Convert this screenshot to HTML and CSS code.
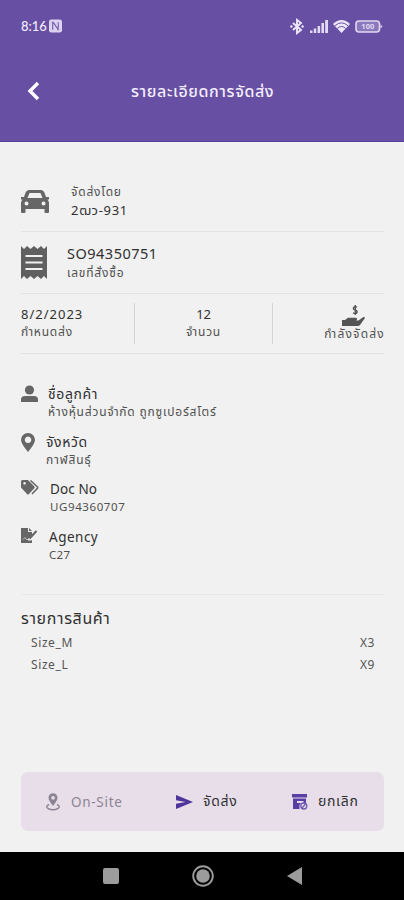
FILE: index.html
```html
<!DOCTYPE html>
<html lang="th">
<head>
<meta charset="utf-8">
<title>รายละเอียดการจัดส่ง</title>
<link rel="stylesheet" href="styles.css">
</head>
<body>
<header class="header">
  <div class="status">
    <span class="clock">8:16</span>
    <svg class="nfc" width="13" height="14" viewBox="0 0 14 14"><rect width="14" height="14" rx="2.5" fill="#dcd2ef"/><path d="M4 11V4.5Q4 3 5.2 4L9 9.5Q10 10.5 10 9V3M3 3h2M9 11h2" fill="none" stroke="#725cab" stroke-width="1.2"/></svg>
    <span class="grow"></span>
    <svg class="bt" width="14" height="15" viewBox="0 0 14 15"><path d="M3 4l8 7-4 3V1l4 3-8 7" fill="none" stroke="#eee7fa" stroke-width="1.9"/><circle cx="1.4" cy="7.5" r="1.2" fill="#eee7fa"/><circle cx="12.6" cy="7.5" r="1.2" fill="#eee7fa"/></svg>
    <svg class="signal" width="18" height="13" viewBox="0 0 18 13"><path d="M0 10.500h2.500V13H0zM3.800 8.500h2.500V13H3.800zM7.600 6h2.500v7H7.600zM11.400 3h2.600v10h-2.600zM15.200 0H18v13h-2.800z" fill="#e3daf4"/></svg>
    <svg class="wifi" width="17" height="13" viewBox="0 0 17 13"><path d="M0 4Q8.500-4 17 4L8.500 13Z" fill="#eee7fa"/><path d="M2 5.700Q8.500 0 15 5.700M4.500 8.300Q8.500 4.700 12.500 8.300" fill="none" stroke="#674fa3" stroke-width="1"/></svg>
    <svg class="battery" width="28" height="13" viewBox="0 0 28 13"><rect x="1" y="1" width="23.500" height="11" rx="3" fill="#8b78bb" stroke="#e0d7f2" stroke-width="1.600"/><path d="M25.500 4.500l2 2-2 2z" fill="#e0d7f2"/><text x="12.800" y="9.300" text-anchor="middle" font-size="7.500" font-weight="700" fill="#e0d7f2">100</text></svg>
  </div>
  <div class="titlebar">
    <svg class="back" width="13" height="20" viewBox="0 0 13 20"><path d="M11 2L3 10l8 8" fill="none" stroke="#fff" stroke-width="3.400"/></svg>
    <h1 class="title">รายละเอียดการจัดส่ง</h1>
  </div>
</header>
<main class="main">
  <section class="row carrier">
    <svg width="28" height="24" viewBox="0 0 28 24"><path d="M8 1h12q2.500 0 3.400 2.500L25 8h3v2.500h-1.500Q28 12 28 14v9q0 1-1 1h-2.500q-1 0-1-1v-3h-19v3q0 1-1 1H1q-1 0-1-1v-9q0-2 1.500-3.500H0V8h3l1.600-4.500Q5.500 1 8 1zM8.500 4L6.500 9h15l-2-5zM5.500 12.500a2 2 0 1 0 .1 4 2 2 0 0 0-.1-4zM22.500 12.500a2 2 0 1 0 .1 4 2 2 0 0 0-.1-4z" fill="#666" fill-rule="evenodd"/></svg>
    <div class="lines"><p class="small">จัดส่งโดย</p><p class="strong">2ฒว-931</p></div>
  </section>
  <section class="row order">
    <svg width="26" height="33" viewBox="0 0 26 33"><path d="M0 0l3 3 3-3 3.500 3L13 0l3.500 3L20 0l3 3 3-3v33l-3-3-3 3-3.500-3-3.500 3-3.500-3L6 33l-3-3-3 3z" fill="#606060"/><path d="M4.500 10h17M4.500 16.500h17M4.500 23h17" stroke="#f1f1f1" stroke-width="2.200"/></svg>
    <div class="lines"><p class="number">SO94350751</p><p class="small">เลขที่สั่งซื้อ</p></div>
  </section>
  <section class="row facts">
    <div class="fact due"><p class="strong date">8/2/2023</p><p class="small">กำหนดส่ง</p></div>
    <div class="fact count"><p class="strong qty">12</p><p class="small">จำนวน</p></div>
    <div class="fact state">
      <svg width="23" height="22" viewBox="0 0 23 22"><path d="M15 2.200Q14 1.400 12.800 1.700 11 2.300 11.500 3.800 12 4.700 13.500 5.200 15.500 6 15 7.600 14 9.300 11 7.900M13.300 0v10" fill="none" stroke="#555" stroke-width="1.400"/><path d="M0 15h3l3-2.300h8q1.500.3 1 1.800l-1 .9h2.500l4.500-3.200q1.600-.5 2 .7L18 20q-1 1-2.500 1H0z" fill="#555"/></svg>
      <p class="small status-text">กำลังจัดส่ง</p>
    </div>
  </section>
  <section class="details">
    <div class="detail">
      <svg width="17" height="18" viewBox="0 0 17 18"><circle cx="8.500" cy="5" r="4.600" fill="#666"/><path d="M0 17v-2.500Q0 11 4 11h9q4 0 4 3.500V17z" fill="#666"/></svg>
      <div class="lines d1"><p class="label">ชื่อลูกค้า</p><p class="small">ห้างหุ้นส่วนจำกัด ถูกซูเปอร์สโตร์</p></div>
    </div>
    <div class="detail">
      <svg width="14" height="19" viewBox="0 0 14 19"><path d="M7 19Q0 10.500 0 7a7 7 0 0 1 14 0Q14 10.500 7 19zM7 3.500a3.300 3.300 0 1 0 .1 0z" fill="#666" fill-rule="evenodd"/></svg>
      <div class="lines d2"><p class="label">จังหวัด</p><p class="small">กาฬสินธุ์</p></div>
    </div>
    <div class="detail">
      <svg class="tags" width="18" height="15" viewBox="0 0 18 15"><path d="M0 1.500Q0 0 1.500 0H7l6.300 6.500q.9.900 0 1.800L8 14q-1 1-2 0L0 7.500zM3.500 2a1.300 1.300 0 1 0 .1 0z" fill="#666" fill-rule="evenodd"/><path d="M9.500.5l7 6.500q.5.500 0 1.200L11 14" fill="none" stroke="#666" stroke-width="1.600"/></svg>
      <div class="lines d3 latin"><p class="label doc">Doc No</p><p class="small">UG94360707</p></div>
    </div>
    <div class="detail">
      <svg class="sign" width="17" height="15" viewBox="0 0 17 15"><path d="M0 0h7v4h4v3l-4 4v1.500h3L11 12v3H0zM8 0l3 3H8z" fill="#666"/><path d="M8.500 10.500L15.500 3" stroke="#666" stroke-width="2.200"/><path d="M2 11.500l2-2 1.500 2H8" fill="none" stroke="#ddd" stroke-width=".8"/></svg>
      <div class="lines d4 latin"><p class="label">Agency</p><p class="small code">C27</p></div>
    </div>
  </section>
  <section class="products">
    <h2 class="heading">รายการสินค้า</h2>
    <div class="product"><span>Size_M</span><span>X3</span></div>
    <div class="product"><span>Size_L</span><span>X9</span></div>
  </section>
  <div class="actions">
    <div class="action onsite"><svg width="14" height="18" viewBox="0 0 14 18"><path d="M7 13Q2.500 7.500 2.500 4.800a4.500 4.500 0 0 1 9 0Q11.500 7.500 7 13zM7 3a1.800 1.800 0 1 0 .1 0z" fill="#8d8493" fill-rule="evenodd"/><path d="M3 11.500Q-1 13.500 2 15.500q5 2.500 10 0 3-2-1-4" fill="none" stroke="#8d8493" stroke-width="1.400"/></svg><span>On-Site</span></div>
    <div class="action send"><svg width="17" height="14" viewBox="0 0 17 14"><path d="M0 0l17 7-17 7V8.800L9.500 7 0 5.200z" fill="#4f359b"/></svg><span>จัดส่ง</span></div>
    <div class="action cancel"><svg width="16" height="16" viewBox="0 0 16 16"><path d="M0 0h15v3.500H0zM1 4.500h13V9h-2.500V7H5v2h4l-1.500 2v4H1z" fill="#593fa3"/><circle cx="11.800" cy="12" r="3" fill="#e7deea" stroke="#7059af" stroke-width="1.300"/><path d="M10 14l3.600-4" stroke="#7059af" stroke-width="1.200"/></svg><span>ยกเลิก</span></div>
  </div>
</main>
<footer class="nav">
  <svg width="16" height="16" viewBox="0 0 16 16"><rect width="16" height="16" rx="2" fill="#9c9c9c"/></svg>
  <svg width="22" height="22" viewBox="0 0 22 22"><circle cx="11" cy="11" r="9.800" fill="none" stroke="#9c9c9c" stroke-width="1.900"/><circle cx="11" cy="11" r="6.800" fill="#9c9c9c"/></svg>
  <svg width="15" height="18" viewBox="0 0 15 18"><path d="M15 0v18L0 9z" fill="#9c9c9c"/></svg>
</footer>
</body>
</html>
```
FILE: styles.css
```css
* { box-sizing: border-box; margin: 0; padding: 0; }
body { width: 404px; height: 900px; overflow: hidden; display: flex; flex-direction: column; background: #f1f1f1; color: #303030; font-family: "Noto Sans", "Noto Sans Thai", sans-serif; }
svg { display: block; flex: none; overflow: visible; }
p, span, h1, h2 { white-space: nowrap; }
.header { height: 142px; flex: none; background: #674fa3; border-bottom: 1px solid #5c429b; color: #f3edfc; }
.status { height: 50px; padding: 2px 21px 0; display: flex; align-items: center; }
.clock { width: 25px; font: 500 13px/18px Lato, sans-serif; }
.nfc { margin-left: 3px; }
.grow { flex: 1; }
.bt { margin-right: 1px; }
.signal { margin-left: 5px; }
.wifi { margin-left: 5px; }
.battery { margin-left: 5px; }
.titlebar { height: 82px; display: flex; align-items: center; padding-left: 27px; }
.title { margin-left: 91px; font-size: 16px; font-weight: 500; line-height: 20px; letter-spacing: .6px; }
.main { height: 710px; flex: none; padding: 20px 20px 0 21px; }
.row { display: flex; align-items: center; border-bottom: 1px solid #e2e2e2; }
.lines p { line-height: 19px; }
.small { font-size: 12px; color: #505050; letter-spacing: .8px; }
.strong { font-size: 13px; letter-spacing: .7px; }
.label { font-size: 14px; letter-spacing: .6px; }
.number { font-size: 14.500px; letter-spacing: .5px; }
.carrier { height: 70px; padding-top: 9px; gap: 22px; }
.order { height: 62px; gap: 20px; }
.facts { height: 60px; align-items: stretch; padding: 9px 0; }
.fact { display: flex; flex-direction: column; padding-top: 2px; }
.fact p { line-height: 18px; }
.date { letter-spacing: 1px; }
.qty { letter-spacing: -.3px; }
.due { width: 114px; border-right: 1px solid #d5d5d5; }
.count { width: 138px; align-items: center; border-right: 1px solid #d5d5d5; }
.state { flex: 1; align-items: flex-end; }
.state svg { margin: 0 19px -2px 0; }
.status-text { margin-right: -1px; letter-spacing: 1.200px; }
.details { height: 241px; padding-top: 31px; border-bottom: 1px solid #e8e8e8; }
.detail { height: 48px; display: flex; align-items: flex-start; }
.detail .lines p { line-height: 18px; }
.d1 { margin-left: 10px; }
.d2, .d3, .d4 { margin-left: 11px; }
.latin { margin-top: -1px; }
.latin .label { font-size: 13.500px; letter-spacing: .5px; }
.latin .doc { letter-spacing: .1px; }
.latin .small { font-size: 11.500px; letter-spacing: .6px; }
.latin .code { letter-spacing: .3px; }
.tags, .sign { margin-top: -1px; }
.products { height: 177px; padding-top: 11px; }
.heading { font-size: 16px; font-weight: 400; line-height: 24px; letter-spacing: .65px; }
.product { display: flex; justify-content: space-between; height: 21.500px; padding: 0 9px 0 10px; font-size: 12px; line-height: 25px; letter-spacing: .6px; color: #555; }
.actions { height: 59px; border-radius: 7px; background: #e7deea; display: flex; align-items: center; font-size: 14px; letter-spacing: .7px; }
.action { display: flex; align-items: center; }
.onsite { width: 155px; padding-left: 25px; gap: 11px; font-size: 13.500px; color: #8d8493; }
.send { width: 116px; gap: 10px; }
.cancel { gap: 10px; }
.nav { height: 48px; flex: none; background: #000; display: grid; grid-template-columns: 16px 22px 15px; column-gap: 73px; justify-content: center; align-items: center; }
```
